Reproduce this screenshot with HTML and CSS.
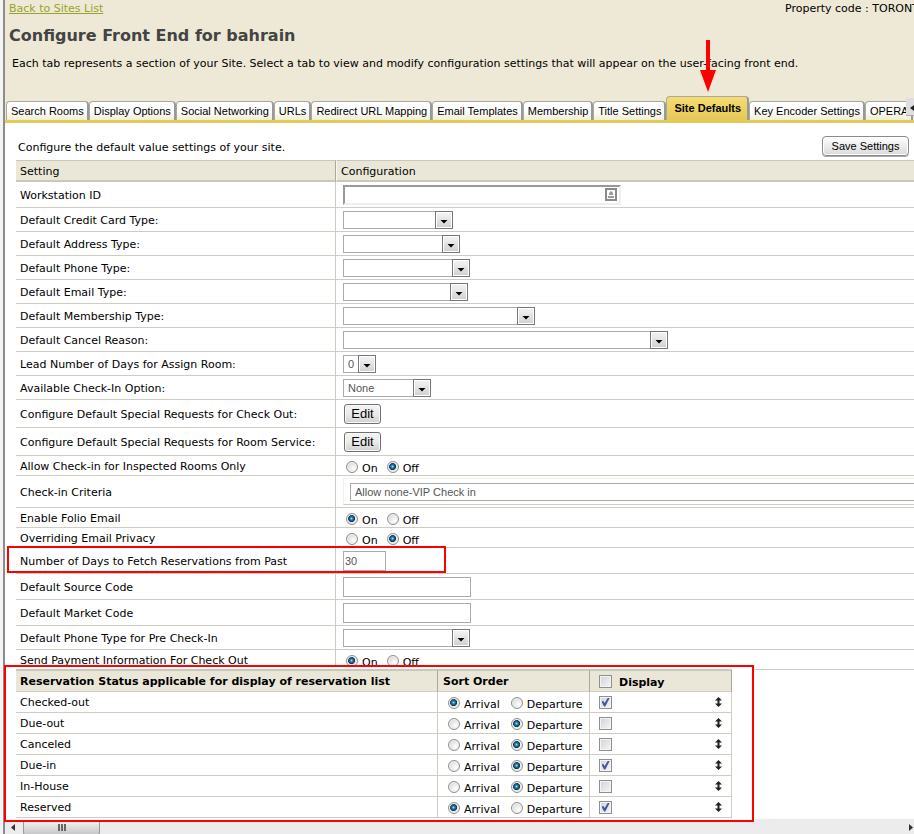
FILE: index.html
```html
<!DOCTYPE html>
<html lang="en">
<head>
<meta charset="utf-8">
<title>Configure Front End for bahrain</title>
<link rel="stylesheet" href="styles.css">
</head>
<body>
<div class="page">
  <header class="masthead">
    <div class="topline">
      <a class="back" href="#">Back to Sites List</a>
      <span class="property">Property code : TORONTO</span>
    </div>
    <h1>Configure Front End for bahrain</h1>
    <p class="intro">Each tab represents a section of your Site. Select a tab to view and modify configuration settings that will appear on the user-facing front end.</p>
    <nav class="tabs">
      <a href="#">Search Rooms</a>
      <a href="#">Display Options</a>
      <a href="#">Social Networking</a>
      <a href="#">URLs</a>
      <a href="#">Redirect URL Mapping</a>
      <a href="#">Email Templates</a>
      <a href="#">Membership</a>
      <a href="#">Title Settings</a>
      <a href="#" class="active">Site Defaults
        <svg class="pointer" width="16" height="52" viewBox="0 0 16 52" aria-hidden="true"><path d="M6 0h4v30h6L8 52 0 30h6z" fill="#f00"/></svg>
      </a>
      <a href="#">Key Encoder Settings</a>
      <a href="#">OPERA</a>
      <button class="tab-scroll" aria-label="Scroll tabs"><svg width="5" height="6" viewBox="0 0 5 6"><path d="M5 0v6L1 3z" fill="#222"/></svg></button>
    </nav>
  </header>

  <main>
    <div class="toolbar">
      <p>Configure the default value settings of your site.</p>
      <button class="save">Save Settings</button>
    </div>

    <table class="settings">
      <colgroup><col class="col-name"><col></colgroup>
      <thead><tr><th>Setting</th><th>Configuration</th></tr></thead>
      <tbody>
        <tr class="tall"><td><label for="ws">Workstation ID</label></td><td><span class="ws"><input id="ws" type="text"><svg width="12" height="13" viewBox="0 0 12 13" aria-hidden="true"><path d="M1 1h10v11H1z" fill="#fff" stroke="#8a8a8a" stroke-width="2"/><path d="M6 3l2 2v2H4V5zM3 8h6v2H3z" fill="#999"/></svg></span></td></tr>
        <tr><td><label for="card">Default Credit Card Type:</label></td><td><span class="pick w110"><select id="card"><option></option></select></span></td></tr>
        <tr><td><label for="addr">Default Address Type:</label></td><td><span class="pick w117"><select id="addr"><option></option></select></span></td></tr>
        <tr><td><label for="phone">Default Phone Type:</label></td><td><span class="pick w127"><select id="phone"><option></option></select></span></td></tr>
        <tr><td><label for="email">Default Email Type:</label></td><td><span class="pick w125"><select id="email"><option></option></select></span></td></tr>
        <tr><td><label for="member">Default Membership Type:</label></td><td><span class="pick w192"><select id="member"><option></option></select></span></td></tr>
        <tr><td><label for="cancel">Default Cancel Reason:</label></td><td><span class="pick w325"><select id="cancel"><option></option></select></span></td></tr>
        <tr><td><label for="lead">Lead Number of Days for Assign Room:</label></td><td><span class="pick w33"><select id="lead"><option>0</option></select></span></td></tr>
        <tr><td><label for="avail">Available Check-In Option:</label></td><td><span class="pick w88"><select id="avail"><option>None</option></select></span></td></tr>
        <tr class="taller"><td>Configure Default Special Requests for Check Out:</td><td><button class="edit">Edit</button></td></tr>
        <tr class="taller"><td>Configure Default Special Requests for Room Service:</td><td><button class="edit">Edit</button></td></tr>
        <tr class="short"><td>Allow Check-in for Inspected Rooms Only</td><td><div class="radios"><label><input type="radio" name="insp">On</label><label><input type="radio" name="insp" checked>Off</label></div></td></tr>
        <tr class="criteria"><td><label for="crit">Check-in Criteria</label></td><td><div class="crit-box"><select id="crit"><option>Allow none-VIP Check in</option></select></div></td></tr>
        <tr class="short"><td>Enable Folio Email</td><td><div class="radios"><label><input type="radio" name="folio" checked>On</label><label><input type="radio" name="folio">Off</label></div></td></tr>
        <tr class="short"><td>Overriding Email Privacy</td><td><div class="radios"><label><input type="radio" name="priv">On</label><label><input type="radio" name="priv" checked>Off</label></div></td></tr>
        <tr class="tall days"><td><label for="days">Number of Days to Fetch Reservations from Past</label><span class="mark"></span></td><td><input class="field narrow" id="days" type="text" value="30"></td></tr>
        <tr class="tall"><td><label for="source">Default Source Code</label></td><td><input class="field" id="source" type="text"></td></tr>
        <tr class="tall"><td><label for="market">Default Market Code</label></td><td><input class="field" id="market" type="text"></td></tr>
        <tr><td><label for="pre">Default Phone Type for Pre Check-In</label></td><td><span class="pick w127"><select id="pre"><option></option></select></span></td></tr>
        <tr class="short"><td>Send Payment Information For Check Out</td><td><div class="radios"><label><input type="radio" name="pay" checked>On</label><label><input type="radio" name="pay">Off</label></div></td></tr>
      </tbody>
    </table>

    <section class="status-box">
      <table class="status">
        <colgroup><col><col class="col-sort"><col class="col-display"></colgroup>
        <thead><tr><th>Reservation Status applicable for display of reservation list</th><th>Sort Order</th><th><label class="all"><input type="checkbox"><span>Display</span></label></th></tr></thead>
        <tbody>
          <tr><td>Checked-out</td><td><div class="radios"><label><input type="radio" name="s1" checked>Arrival</label><label><input type="radio" name="s1">Departure</label></div></td><td><div class="show"><input type="checkbox" aria-label="Display Checked-out" checked><svg class="move" viewBox="0 0 7 10"><path d="M3.500 0L7 3.500H4.500v3H7L3.500 10 0 6.500h2.500v-3H0z"/></svg></div></td></tr>
          <tr><td>Due-out</td><td><div class="radios"><label><input type="radio" name="s2">Arrival</label><label><input type="radio" name="s2" checked>Departure</label></div></td><td><div class="show"><input type="checkbox" aria-label="Display Due-out"><svg class="move" viewBox="0 0 7 10"><path d="M3.500 0L7 3.500H4.500v3H7L3.500 10 0 6.500h2.500v-3H0z"/></svg></div></td></tr>
          <tr><td>Canceled</td><td><div class="radios"><label><input type="radio" name="s3">Arrival</label><label><input type="radio" name="s3" checked>Departure</label></div></td><td><div class="show"><input type="checkbox" aria-label="Display Canceled"><svg class="move" viewBox="0 0 7 10"><path d="M3.500 0L7 3.500H4.500v3H7L3.500 10 0 6.500h2.500v-3H0z"/></svg></div></td></tr>
          <tr><td>Due-in</td><td><div class="radios"><label><input type="radio" name="s4">Arrival</label><label><input type="radio" name="s4" checked>Departure</label></div></td><td><div class="show"><input type="checkbox" aria-label="Display Due-in" checked><svg class="move" viewBox="0 0 7 10"><path d="M3.500 0L7 3.500H4.500v3H7L3.500 10 0 6.500h2.500v-3H0z"/></svg></div></td></tr>
          <tr><td>In-House</td><td><div class="radios"><label><input type="radio" name="s5">Arrival</label><label><input type="radio" name="s5" checked>Departure</label></div></td><td><div class="show"><input type="checkbox" aria-label="Display In-House"><svg class="move" viewBox="0 0 7 10"><path d="M3.500 0L7 3.500H4.500v3H7L3.500 10 0 6.500h2.500v-3H0z"/></svg></div></td></tr>
          <tr><td>Reserved</td><td><div class="radios"><label><input type="radio" name="s6" checked>Arrival</label><label><input type="radio" name="s6">Departure</label></div></td><td><div class="show"><input type="checkbox" aria-label="Display Reserved" checked><svg class="move" viewBox="0 0 7 10"><path d="M3.500 0L7 3.500H4.500v3H7L3.500 10 0 6.500h2.500v-3H0z"/></svg></div></td></tr>
        </tbody>
      </table>
    </section>
  </main>

  <div class="hscroll" aria-hidden="true">
    <svg width="4" height="7" viewBox="0 0 4 7"><path d="M4 0v7L0 3.500z" fill="#333"/></svg>
    <div class="thumb"><i></i><i></i><i></i></div>
    <svg class="end" width="4" height="7" viewBox="0 0 4 7"><path d="M0 0v7l4-3.500z" fill="#333"/></svg>
  </div>
</div>
</body>
</html>
```
FILE: styles.css
```css
*, *::before, *::after { box-sizing: border-box; }

body {
  margin: 0;
  background: #f4f4f4;
  color: #000;
  font: 11px/14px Verdana, "DejaVu Sans", sans-serif;
  overflow: hidden;
}

.page {
  position: relative;
  z-index: 0;
  margin-left: 3px;
  border-left: 2px solid #8c8c8c;
  background: #fff;
}

/* Masthead */
.masthead { background: #eee9d6; border-bottom: 3px solid #e3ca57; }

.topline {
  display: flex;
  justify-content: space-between;
  padding: 2px 0 0 4px;
}
.back { color: #96a42c; }
.property { width: 129px; white-space: nowrap; }

h1 {
  margin: 0;
  padding: 9px 4px 0;
  color: #444;
  font: bold 16px/22px Verdana, "DejaVu Sans", sans-serif;
}

.intro { margin: 0; padding: 10px 7px 0; white-space: nowrap; }

/* Tabs */
.tabs {
  display: flex;
  align-items: flex-end;
  height: 49px;
  padding-left: 1px;
  position: relative;
}
.tabs a {
  flex: none;
  height: 19px;
  padding: 0 3px 0 4px;
  border: 1px solid #a9a9a0;
  border-right: 2px solid #999;
  border-bottom: 0;
  border-radius: 4px 4px 0 0;
  background: linear-gradient(#fff 50%, #efeed2);
  color: #000;
  font: 11px/19px "Liberation Sans", Arial, sans-serif;
  text-decoration: none;
}
.tabs .active {
  position: relative;
  height: 24px;
  padding: 0 6px 0 7px;
  background: linear-gradient(#f5dc70, #e5c956);
  font-weight: bold;
  line-height: 22px;
}
.pointer { position: absolute; left: 33px; top: -57px; }
.tab-scroll {
  position: absolute;
  right: 0;
  bottom: 4px;
  width: 8px;
  height: 18px;
  padding: 0;
  border: 0;
  border-bottom: 1px solid #aaa;
  background: #dedede;
  text-align: right;
}

/* Toolbar */
.toolbar {
  display: flex;
  align-items: center;
  justify-content: space-between;
  height: 37px;
  padding: 9px 5px 0 13px;
}
.toolbar p { margin: 0; padding-top: 3px; }
.save {
  width: 87px;
  height: 20px;
  padding: 0;
  border: 1px solid #8c8c8c;
  border-radius: 4px;
  background: linear-gradient(#fff, #eee 45%, #dadada);
  box-shadow: inset 0 0 0 1px #fff, 0 1px 0 #aaa;
  font: 11px/16px "Liberation Sans", Arial, sans-serif;
}

/* Tables */
table { border-spacing: 0; table-layout: fixed; }
th { background: #eae7d8; font-weight: normal; text-align: left; }
th, td { padding: 0 4px; border-bottom: 1px solid #cfccc2; }
td:first-child, th { padding-top: 2px; }

.settings { width: calc(100% - 11px); margin-left: 11px; }
.col-name { width: 320px; }
.settings th {
  height: 22px;
  border-top: 1px solid #cbc8bb;
  border-bottom: 2px solid #cbc8bb;
}
.settings th:first-child { border-right: 1px solid #aaa79b; }
.settings th + th { border-left: 1px solid #f8f7f2; }
.settings td:first-child { border-right: 1px solid #cfccc2; white-space: nowrap; }
.settings tbody tr { height: 24px; }
.settings .short { height: 20px; }
.settings .tall { height: 26px; }
.settings .taller { height: 28px; }
.settings .criteria { height: 32px; }
.settings td + td { padding: 0 0 0 7px; }

input, select { margin: 0; font: 11px/14px "Liberation Sans", Arial, sans-serif; color: #555; }

.ws { display: flex; align-items: center; position: relative; width: 278px; }
.ws input {
  width: 100%;
  height: 20px;
  border: 2px solid;
  border-color: #999 #eee #eee #999;
  background: #fff;
}
.ws svg { position: absolute; right: 4px; }

.pick { display: block; position: relative; height: 18px; }
.pick select {
  display: block;
  width: 100%;
  height: 18px;
  padding: 0 4px;
  border: 1px solid #aaaab0;
  border-radius: 0;
  background: #fff;
  appearance: none;
}
.pick::before {
  content: "";
  position: absolute;
  right: 0;
  top: 0;
  width: 18px;
  height: 18px;
  border: 1px solid #77777c;
  background: linear-gradient(#f6f6f6, #cfcfcf);
  box-shadow: inset 0 0 0 1px #fff;
  pointer-events: none;
}
.pick::after {
  content: "";
  position: absolute;
  right: 5px;
  top: 9px;
  width: 8px;
  height: 4px;
  background: #000;
  clip-path: polygon(0 0, 100% 0, 50% 100%);
  pointer-events: none;
}
.w33 { width: 33px; }
.w88 { width: 88px; }
.w110 { width: 110px; }
.w117 { width: 117px; }
.w125 { width: 125px; }
.w127 { width: 127px; }
.w192 { width: 192px; }
.w325 { width: 325px; }

.field {
  display: block;
  width: 128px;
  height: 20px;
  padding: 0 1px;
  border: 1px solid #aaaab0;
  background: #fff;
}
.narrow { width: 43px; }

.edit {
  display: block;
  width: 37px;
  height: 20px;
  margin-left: 1px;
  padding: 0;
  border: 1px solid #707070;
  border-radius: 3px;
  background: linear-gradient(#f3f3f3, #ebebeb 50%, #cfcfcf);
  box-shadow: inset 0 0 0 1px #fafafa;
  font: 13px/18px "Liberation Sans", Arial, sans-serif;
}

.crit-box {
  height: 27px;
  padding: 4px 0 0 6px;
  border: 1px solid #f0eee8;
  border-right: 0;
  border-bottom-color: #cfccc2;
}
.crit-box select {
  display: block;
  width: 100%;
  height: 18px;
  padding: 0 4px;
  border: 1px solid #aaa;
  border-right: 0;
  border-radius: 0;
  background: #fff;
  appearance: none;
}

.days td:first-child { position: relative; }
.mark {
  position: absolute;
  left: -9px;
  top: -2px;
  width: 439px;
  height: 27px;
  border: 2px solid #f00;
  pointer-events: none;
}

/* Radios and check boxes */
.radios { display: flex; gap: 9px; height: 16px; padding-left: 3px; }
.radios label { display: flex; align-items: flex-start; gap: 4px; line-height: 22px; }
input[type="radio"] {
  flex: none;
  width: 12px;
  height: 12px;
  margin-top: 3px;
  border: 1px solid #8e8f8f;
  border-radius: 50%;
  background: radial-gradient(circle at 65% 65%, #fff, #ccc);
  box-shadow: inset 0 0 0 1px #f4f4f4;
  appearance: none;
}
input[type="radio"]:checked {
  background: radial-gradient(circle at 45% 45%, #9fe0f5 0, #2a7fae 18%, #0b3550 42%, #e6e6e6 50%);
}
input[type="checkbox"] {
  display: grid;
  place-items: center;
  width: 13px;
  height: 13px;
  border: 1px solid #8e8f8f;
  background: linear-gradient(135deg, #cfd2d6, #f6f6f6);
  box-shadow: inset 0 0 0 1px #f4f4f4;
  appearance: none;
}
input[type="checkbox"]:checked::before {
  content: "";
  width: 8px;
  height: 9px;
  background: #4257a4;
  clip-path: polygon(0 45%, 22% 38%, 40% 62%, 80% 0, 100% 8%, 48% 100%, 32% 100%);
}

/* Reservation status */
.status-box {
  position: relative;
  width: 750px;
  height: 157px;
  margin: -5px 0 -3px -1px;
  padding: 2px 0 0 10px;
  border: 2px solid #f00;
  background: #fff;
}
.status { width: 716px; }
.col-sort { width: 152px; }
.col-display { width: 142px; }
.status th {
  height: 23px;
  border-top: 2px solid #cbc8bb;
  font-weight: bold;
  white-space: nowrap;
}
.status th:last-child { padding-top: 0; }
.status tr > * { border-right: 1px solid #cfccc2; }
.status th + th { padding-left: 5px; }
.status th:first-child, .status th + th { border-right-color: #aaa79b; }
.status td { height: 21px; }
.status td + td { padding-left: 7px; }
.status .radios { gap: 11px; }
.status td:last-child { padding: 0 9px; }
.all, .show { display: flex; align-items: center; }
.all { gap: 7px; padding-left: 4px; }
.all span { padding-top: 4px; }
.show { justify-content: space-between; }
.move { width: 7px; height: 10px; fill: #222; }

/* Horizontal scroll strip */
.hscroll {
  position: relative;
  z-index: -1;
  display: flex;
  align-items: center;
  height: 16px;
  padding: 0 1px 0 6px;
  background: #ececec;
}
.thumb {
  display: flex;
  align-items: center;
  justify-content: center;
  gap: 1px;
  width: 77px;
  height: 15px;
  margin-left: 8px;
  border: 1px solid #999;
  border-radius: 2px;
  background: linear-gradient(#f4f4f4, #ddd 50%, #c8c8c8);
}
.thumb i { width: 2px; height: 7px; background: #666; }
.end { margin-left: auto; }
```
